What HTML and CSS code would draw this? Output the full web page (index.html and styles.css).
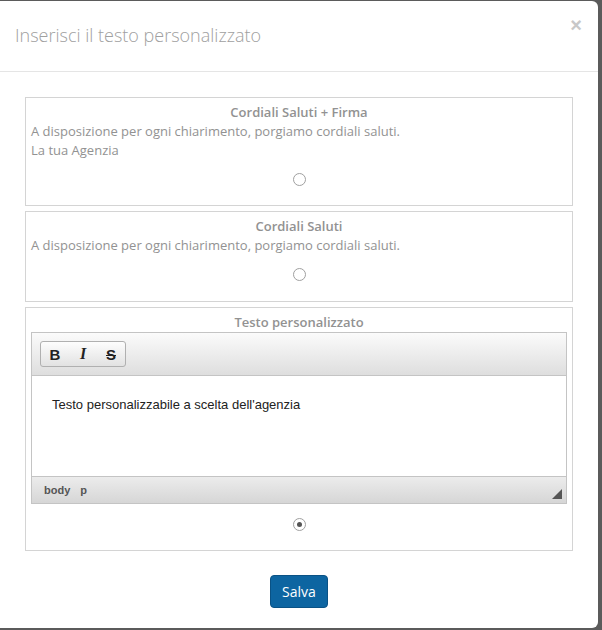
FILE: index.html
```html
<!DOCTYPE html>
<html lang="it">
<head>
<meta charset="utf-8">
<title>Inserisci il testo personalizzato</title>
<link rel="stylesheet" href="styles.css">
</head>
<body>
<div class="modal">
  <div class="modal-header">
    <h4 class="modal-title">Inserisci il testo personalizzato</h4>
    <span class="close">&times;</span>
  </div>
  <div class="modal-body">
    <div class="option">
      <div class="option-title">Cordiali Saluti + Firma</div>
      <div class="option-text">A disposizione per ogni chiarimento, porgiamo cordiali saluti.<br>La tua Agenzia</div>
      <div class="radio-row"><span class="radio"></span></div>
    </div>
    <div class="option">
      <div class="option-title">Cordiali Saluti</div>
      <div class="option-text">A disposizione per ogni chiarimento, porgiamo cordiali saluti.</div>
      <div class="radio-row radio-row-tall"><span class="radio"></span></div>
    </div>
    <div class="option">
      <div class="option-title">Testo personalizzato</div>
      <div class="editor">
        <div class="toolbar">
          <div class="btn-group">
            <span class="tb tb-b">B</span>
            <span class="tb tb-i">I</span>
            <span class="tb tb-s">S</span>
          </div>
        </div>
        <div class="content">Testo personalizzabile a scelta dell'agenzia</div>
        <div class="statusbar">
          <span class="path">body</span><span class="path">p</span>
          <span class="resize"></span>
        </div>
      </div>
      <div class="radio-row radio-row-last"><span class="radio checked"></span></div>
    </div>
  </div>
  <div class="modal-footer">
    <button class="btn-save">Salva</button>
  </div>
</div>
</body>
</html>
```
FILE: styles.css
```css
html, body {
  margin: 0;
  padding: 0;
  background: #5b5b5b;
}
body {
  font-family: "Open Sans", "Liberation Sans", sans-serif;
  width: 602px;
  height: 630px;
  overflow: hidden;
}
.modal {
  margin-top: 1px;
  width: 598px;
  height: 627px;
  background: #fff;
  border-radius: 0 6px 6px 0;
  box-sizing: border-box;
}
.modal-header {
  height: 70px;
  border-bottom: 1px solid #e5e5e5;
  display: flex;
  align-items: center;
  justify-content: space-between;
  padding: 0 15px;
  position: relative;
}
.modal-title {
  margin: 0;
  font-weight: 300;
  font-size: 18px;
  color: #a0a0a0;
  padding-bottom: 2px;
}
.close {
  position: absolute;
  right: 16px;
  top: 13px;
  font-size: 20px;
  color: #c8c8c8;
  font-family: "Liberation Sans", sans-serif;
  font-weight: bold;
}
.modal-body {
  padding: 25px 25px 0 25px;
  display: flex;
  flex-direction: column;
  gap: 5px;
}
.option {
  border: 1px solid #d4d4d4;
  padding: 5px 5px 0 5px;
}
.option-title {
  text-align: center;
  font-weight: 600;
  font-size: 13px;
  line-height: 19px;
  color: #929292;
}
.option-text {
  font-size: 13px;
  line-height: 19px;
  color: #929292;
}
.radio-row {
  display: flex;
  justify-content: center;
  padding: 13px 0 19px;
}
.radio-row-tall {
  padding-bottom: 20px;
}
.radio-row-last {
  padding-top: 14px;
}
.radio {
  width: 13px;
  height: 13px;
  border: 1px solid #a0a0a0;
  border-radius: 50%;
  box-sizing: border-box;
  display: flex;
  align-items: center;
  justify-content: center;
  background: #fff;
}
.radio.checked::after {
  content: "";
  width: 5px;
  height: 5px;
  border-radius: 50%;
  background: #555;
}
.editor {
  border: 1px solid #c4c4c4;
  font-family: "Liberation Sans", Arial, sans-serif;
}
.toolbar {
  height: 43px;
  border-bottom: 1px solid #c4c4c4;
  background: linear-gradient(#fbfbfb, #dedede);
  padding: 8px 0 0 8px;
  box-sizing: border-box;
}
.btn-group {
  display: inline-flex;
  align-items: center;
  height: 26px;
  padding: 0;
  border: 1px solid #b0b0b0;
  border-radius: 3px;
  background: linear-gradient(#fdfdfd, #e2e2e2);
  box-sizing: border-box;
}
.tb {
  width: 28px;
  text-align: center;
  font-size: 15px;
  font-weight: bold;
  color: #222;
}
.tb-b { font-family: "Liberation Sans", sans-serif; }
.tb-i { font-family: "Liberation Serif", serif; font-style: italic; font-size: 16px; }
.tb-s { text-decoration: line-through; }
.content {
  height: 100px;
  box-sizing: border-box;
  padding: 21px 20px 0 20px;
  font-size: 13px;
  color: #222;
  background: #fff;
}
.statusbar {
  height: 26px;
  border-top: 1px solid #c4c4c4;
  background: linear-gradient(#ececec, #d6d6d6);
  display: flex;
  align-items: center;
  padding-left: 12px;
  position: relative;
}
.path {
  font-size: 11px;
  font-weight: bold;
  color: #555;
  margin-right: 10px;
}
.resize {
  position: absolute;
  right: 4px;
  bottom: 4px;
  width: 0;
  height: 0;
  border-left: 10px solid transparent;
  border-bottom: 10px solid #555;
}
.modal-footer {
  display: flex;
  justify-content: center;
  padding-top: 24px;
}
.btn-save {
  width: 58px;
  height: 33px;
  border: 1px solid #0a5285;
  border-radius: 4px;
  background: #0d65a1;
  color: #fff;
  font-family: "Open Sans", sans-serif;
  font-size: 14px;
  padding: 0;
}
```
